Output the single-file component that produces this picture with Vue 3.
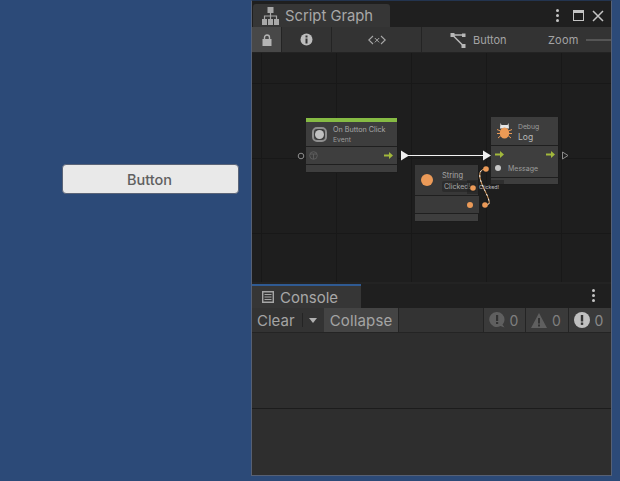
<script setup>
const tools = [
  { label: '0', kind: 'info' },
  { label: '0', kind: 'warn' },
  { label: '0', kind: 'error' },
]
</script>

<template>
  <div class="page">
    <div class="left">
      <button class="game-button">Button</button>
    </div>
    <div class="window">
      <div class="tabbar">
        <div class="tab graph-tab">
          <svg class="tab-icon" width="17" height="19" viewBox="0 0 17 19">
            <path d="M5.500 1h6v6h-6zM0 13h5v6H0zM6 13h5v6H6zM12 13h5v6h-5z" fill="#a8a8a8"/>
            <path d="M8.500 7v6M2.500 13v-3h12v3" fill="none" stroke="#a8a8a8" stroke-width="1.200"/>
          </svg>
          <span>Script Graph</span>
        </div>
        <div class="window-actions">
          <span class="kebab"><i></i><i></i><i></i></span>
          <span class="maximize"></span>
          <svg width="12" height="12" viewBox="0 0 12 12">
            <path d="M1 1l10 10M11 1L1 11" stroke="#c4c4c4" stroke-width="1.500" fill="none"/>
          </svg>
        </div>
      </div>
      <div class="toolbar">
        <div class="tool lock">
          <svg width="10" height="12" viewBox="0 0 10 12">
            <path d="M2.500 5V3.500a2.500 2.500 0 0 1 5 0V5" fill="none" stroke="#b4b4b4" stroke-width="1.400"/>
            <rect x="0.500" y="5" width="9" height="7" fill="#b4b4b4"/>
          </svg>
        </div>
        <div class="tool info">
          <svg width="13" height="13" viewBox="0 0 13 13">
            <circle cx="6.500" cy="6.500" r="6" fill="#bcbcbc"/>
            <rect x="5.500" y="5.500" width="2" height="5" fill="#333"/>
            <rect x="5.500" y="2.500" width="2" height="2" fill="#333"/>
          </svg>
        </div>
        <div class="tool vars">
          <svg width="18" height="10" viewBox="0 0 18 10">
            <path d="M5 1L.8 5 5 9M13 1l4.200 4L13 9" fill="none" stroke="#a8a8a8" stroke-width="1.100"/>
            <path d="M6.800 3l4.400 4.400M11.200 3L6.800 7.400" fill="none" stroke="#a8a8a8" stroke-width="1"/>
          </svg>
        </div>
        <div class="tool crumb">
          <svg width="16" height="16" viewBox="0 0 16 16">
            <path d="M2.500 3h11M2.500 3l11 11" stroke="#b8b8b8" stroke-width="1.500" fill="none"/>
            <rect x="0.500" y="1" width="4" height="4" fill="#b8b8b8"/>
            <rect x="12" y="1.500" width="3.500" height="3.500" fill="#b8b8b8"/>
            <rect x="11.500" y="12" width="4" height="4" fill="#b8b8b8"/>
          </svg>
          <span>Button</span>
        </div>
        <div class="zoom">
          <span>Zoom</span>
          <i class="zoom-track"></i>
        </div>
      </div>

      <div class="canvas">
        <svg class="wires" width="359" height="230" viewBox="0 0 359 230">
          <path d="M152 102.500h80" stroke="#f2f2f2" stroke-width="1.200" fill="none"/>
          <path d="M149 97.500l8 5-8 5z" fill="#f0f0f0"/>
          <path d="M231 97.500l8 5-8 5z" fill="#f0f0f0"/>
          <path d="M310.500 99l5.500 3.500-5.500 3.500z" fill="none" stroke="#8a8a8a"/>
          <circle cx="49" cy="103" r="2.800" fill="none" stroke="#8c8c8c"/>
        </svg>

        <div class="node event-node">
          <div class="node-stripe"></div>
          <div class="node-head">
            <span class="event-icon"><i></i></span>
            <div class="node-titles">
              <span class="small">On Button Click</span>
              <span class="smaller">Event</span>
            </div>
          </div>
          <div class="node-row row-event">
            <svg width="9" height="9" viewBox="0 0 9 9">
              <circle cx="4.500" cy="4.500" r="3.800" fill="none" stroke="#5c5c5c"/>
              <path d="M1 3h7M4.500 3v5" stroke="#5c5c5c" fill="none"/>
            </svg>
            <svg class="flow" width="9" height="7" viewBox="0 0 9 7">
              <path d="M0 2.500h5V0l4 3.500L5 7V4.500H0z" fill="#a2b83c"/>
            </svg>
          </div>
          <div class="node-foot"></div>
        </div>

        <div class="node log-node">
          <div class="node-head log-head">
            <svg width="15" height="16" viewBox="0 0 15 16">
              <path d="M3.500 0l1 2h6l1-2 .5 5.500H3z" fill="#e6e6e6"/>
              <ellipse cx="7.500" cy="10" rx="4.700" ry="5.500" fill="#ec9a55"/>
              <path d="M0 6.500l3.500 1.500M15 6.500L11.500 8M0 10.500h3M15 10.500h-3M1 15l3-2.500M14 15l-3-2.500" stroke="#ec9a55" fill="none"/>
            </svg>
            <div class="node-titles">
              <span class="smaller">Debug</span>
              <span class="small">Log</span>
            </div>
          </div>
          <div class="log-rows">
            <div class="flow-row">
              <svg width="9" height="7" viewBox="0 0 9 7"><path d="M0 2.500h5V0l4 3.500L5 7V4.500H0z" fill="#a2b83c"/></svg>
              <svg width="9" height="7" viewBox="0 0 9 7"><path d="M0 2.500h5V0l4 3.500L5 7V4.500H0z" fill="#a2b83c"/></svg>
            </div>
            <div class="message-row"><i class="port-grey"></i><span>Message</span></div>
          </div>
          <div class="node-foot"></div>
        </div>

        <div class="node string-node">
          <div class="node-head string-head">
            <i class="string-dot"></i>
            <div class="node-titles">
              <span class="small">String</span>
              <span class="string-value">Clicked!</span>
            </div>
          </div>
          <div class="string-row"><i class="port-orange"></i></div>
          <div class="node-foot"></div>
        </div>

        <div class="value-tip">Clicked!</div>
        <svg class="wires top-wires" width="359" height="230" viewBox="0 0 359 230">
          <path d="M234 116c-5 0-7 3-6 9 2 9 8 17 9 23 1 3-1 4-4 4" fill="none" stroke="#e8a35f" stroke-width="1"/>
          <path d="M234 116c-5 0-7 3-6 9 2 9 8 17 9 23 1 3-1 4-4 4" fill="none" stroke="#e8e8e8" stroke-width="1" stroke-dasharray="2 3"/>
          <circle cx="234" cy="116" r="2.800" fill="#eb9a58"/>
          <circle cx="233" cy="152" r="2.800" fill="#eb9a58"/>
          <circle cx="221" cy="135" r="2.800" fill="#eb9a58"/>
        </svg>
      </div>

      <div class="console-tabs">
        <div class="tab console-tab">
          <svg width="12" height="12" viewBox="0 0 12 12">
            <path d="M.7.7h10.600v10.600H.7z" fill="none" stroke="#a6a6a6" stroke-width="1.400"/>
            <path d="M2.500 3.500h7M2.500 6h7M2.500 8.500h7" stroke="#a6a6a6" stroke-width="1.200"/>
          </svg>
          <span>Console</span>
        </div>
        <span class="kebab console-kebab"><i></i><i></i><i></i></span>
      </div>
      <div class="console-bar">
        <div class="clear-group">
          <span>Clear</span>
          <i class="sep"></i>
          <i class="caret"></i>
        </div>
        <div class="collapse">Collapse</div>
        <div class="spacer"></div>
        <div v-for="t in tools" :key="t.kind" class="count" :class="t.kind">
          <svg v-if="t.kind === 'info'" width="16" height="16" viewBox="0 0 16 16">
            <path d="M8 0a7.500 7.500 0 0 1 7.500 7.500c0 2-.8 3.700-2 5l2 3-4-1.500a7.500 7.500 0 1 1-3.500-14z" fill="#5f5f5f"/>
            <rect x="7" y="3" width="2.200" height="6" fill="#323232"/>
            <rect x="7" y="10" width="2.200" height="2" fill="#323232"/>
          </svg>
          <svg v-else-if="t.kind === 'warn'" width="16" height="15" viewBox="0 0 16 15">
            <path d="M8 0l8 15H0z" fill="#5f5f5f"/>
            <rect x="7" y="5" width="2" height="5.500" fill="#323232"/>
            <rect x="7" y="11.500" width="2" height="2" fill="#323232"/>
          </svg>
          <svg v-else width="16" height="16" viewBox="0 0 16 16">
            <circle cx="8" cy="8" r="8" fill="#c0c0c0"/>
            <rect x="6.800" y="3" width="2.400" height="6.500" fill="#333"/>
            <rect x="6.800" y="10.500" width="2.400" height="2.400" fill="#333"/>
          </svg>
          <span>{{ t.label }}</span>
        </div>
      </div>
      <div class="log-list"></div>
      <div class="log-detail"></div>
    </div>
  </div>
</template>

<style>
html, body { margin: 0; background: #2c4a78; }
</style>

<style scoped>
.page {
  width: 620px;
  height: 481px;
  display: flex;
  overflow: hidden;
  background: #2c4a78;
  font-family: Inter, "Liberation Sans", sans-serif;
}
.left {
  width: 251px;
  flex: none;
  padding: 164px 0 0 62px;
  box-sizing: border-box;
}
.game-button {
  display: block;
  width: 177px;
  height: 30px;
  padding: 0 2px 0 0;
  border: 1px solid #5a6478;
  border-radius: 4px;
  background: #e9e9e9;
  color: #606060;
  font: 500 14.500px Inter, "Liberation Sans", sans-serif;
}
.window {
  width: 361px;
  height: 476px;
  flex: none;
  box-sizing: border-box;
  display: flex;
  flex-direction: column;
  background: #2e2e2e;
  border: 1px solid #566074;
  border-top-color: #23344f;
}
.tabbar {
  height: 26px;
  flex: none;
  display: flex;
  align-items: flex-end;
  justify-content: space-between;
  background: #1f1f1f;
  padding-left: 1px;
}
.tab {
  display: flex;
  align-items: center;
  box-sizing: border-box;
  background: #363636;
  color: #a8a8a8;
  font-size: 15px;
}
.graph-tab {
  width: 137px;
  height: 23px;
  gap: 6px;
  padding-left: 9px;
  border-radius: 3px 3px 0 0;
  font-size: 14.800px;
}
.window-actions {
  display: flex;
  align-items: center;
  gap: 8px;
  align-self: flex-start;
  padding: 8px 7px 0 0;
}
.kebab {
  display: flex;
  flex-direction: column;
  gap: 2px;
  width: 3px;
  margin-right: 6px;
}
.kebab i {
  width: 3px;
  height: 3px;
  border-radius: 50%;
  background: #c4c4c4;
}
.maximize {
  width: 9px;
  height: 7px;
  border: 1.500px solid #c4c4c4;
  border-top-width: 3px;
}
.toolbar {
  height: 26px;
  flex: none;
  display: flex;
  align-items: stretch;
  background: #333;
  border-bottom: 1px solid #232323;
  box-sizing: border-box;
  color: #a4a4a4;
  font-size: 11px;
  overflow: hidden;
}
.tool {
  display: flex;
  flex: none;
  align-items: center;
  justify-content: center;
  box-sizing: border-box;
  border-right: 1px solid #242424;
}
.lock { width: 30px; background: #484848; }
.info { width: 50px; }
.vars { width: 90px; }
.crumb {
  border-right: 0;
  width: 125px;
  gap: 7px;
  justify-content: flex-start;
  padding-left: 28px;
}
.zoom {
  display: flex;
  flex: none;
  align-items: center;
  gap: 7px;
  margin-left: 1px;
  letter-spacing: .2px;
}
.zoom-track {
  width: 28px;
  height: 2px;
  background: #555;
}
.canvas {
  position: relative;
  height: 231px;
  flex: none;
  background-color: #1e1e1e;
  background-image:
    linear-gradient(#181818 1px, transparent 1px),
    linear-gradient(90deg, #181818 1px, transparent 1px);
  background-size: 75px 75px;
  background-position: 9px 30px;
  overflow: hidden;
  border-bottom: 2px solid #232323;
  box-sizing: border-box;
}
.wires { position: absolute; left: 0; top: 0; }
.top-wires { z-index: 3; }
.node {
  position: absolute;
  box-sizing: border-box;
  background: #2a2a2a;
  display: flex;
  flex-direction: column;
  color: #b8b8b8;
  border: 1px solid #1c1c1c;
  border-width: 0 1px 1px 0;
}
.event-node { left: 54px; top: 65px; width: 92px; height: 55px; }
.log-node { left: 239px; top: 64px; width: 68px; height: 68px; }
.string-node { left: 163px; top: 112px; width: 64px; height: 57px; }
.node-stripe { height: 4px; background: #86bb44; flex: none; }
.node-head {
  height: 24px;
  flex: none;
  display: flex;
  align-items: center;
  gap: 6px;
  padding-left: 6px;
  background: #3d3d3d;
  border-bottom: 1px solid #1f1f1f;
}
.log-head { height: 28px; gap: 6px; padding-left: 6px; }
.log-head .node-titles { padding-top: 3px; }
.string-head { height: 30px; gap: 9px; padding-left: 6px; background: #383838; }
.string-head .node-titles { padding-top: 3px; }
.node-titles { display: flex; flex-direction: column; gap: 1px; min-width: 0; }
.small { font-size: 7.200px; line-height: 9px; white-space: nowrap; color: #a8a8a8; }
.smaller { font-size: 6.800px; line-height: 9px; color: #9c9c9c; white-space: nowrap; }
.log-node .small { font-size: 8.500px; line-height: 11px; color: #b8b8b8; }
.string-node .small { font-size: 7.500px; }
.event-icon {
  width: 15px;
  height: 15px;
  flex: none;
  box-sizing: border-box;
  border: 2px solid #8e8e8e;
  border-radius: 5px;
  display: flex;
  align-items: center;
  justify-content: center;
}
.event-icon i {
  width: 9px;
  height: 9px;
  border-radius: 50%;
  background: #c0c0c0;
}
.node-row {
  flex: none;
  height: 18px;
  background: #3e3e3e;
  border-bottom: 1px solid #1f1f1f;
  box-sizing: border-box;
}
.row-event {
  display: flex;
  align-items: center;
  justify-content: space-between;
  padding: 0 4px 0 3px;
}
.log-rows {
  height: 32px;
  flex: none;
  box-sizing: border-box;
  background: #3e3e3e;
  border-bottom: 1px solid #1f1f1f;
  display: flex;
  flex-direction: column;
}
.flow-row {
  display: flex;
  justify-content: space-between;
  align-items: center;
  height: 15px;
  padding: 1px 3px 0 4px;
  box-sizing: border-box;
}
.message-row {
  display: flex;
  align-items: center;
  gap: 7px;
  padding-left: 4px;
  height: 14px;
  font-size: 7px;
  color: #9c9c9c;
}
.port-grey {
  width: 6px;
  height: 6px;
  border-radius: 50%;
  background: #c8c8c8;
}
.node-foot { flex: 1; background: #3e3e3e; }
.string-dot {
  width: 12px;
  height: 12px;
  border-radius: 50%;
  background: #eb9a58;
  flex: none;
}
.string-value {
  font-size: 7px;
  line-height: 11px;
  background: #2c2c2c;
  color: #aaa;
  padding-left: 2px;
  box-sizing: border-box;
  border-radius: 2px;
  width: 34px;
  white-space: nowrap;
}
.string-row {
  height: 18px;
  flex: none;
  box-sizing: border-box;
  background: #3a3a3a;
  border-bottom: 1px solid #1f1f1f;
  display: flex;
  align-items: center;
  justify-content: flex-end;
  padding-right: 6px;
  margin-right: -1px;
}
.port-orange {
  width: 6px;
  height: 6px;
  border-radius: 50%;
  background: #eb9a58;
}
.value-tip {
  position: absolute;
  z-index: 2;
  left: 215px;
  top: 127px;
  width: 37px;
  height: 14px;
  box-sizing: border-box;
  padding-left: 12px;
  background: rgba(30, 30, 30, .5);
  color: #c4c4c4;
  font-size: 5.300px;
  line-height: 14px;
  white-space: nowrap;
}
.console-tabs {
  height: 24px;
  flex: none;
  display: flex;
  justify-content: space-between;
  background: #1f1f1f;
}
.console-tab {
  width: 109px;
  height: 24px;
  gap: 6px;
  padding-left: 10px;
  border-top: 2px solid #2f5a92;
}
.console-kebab { margin: 5px 16px 0 0; }
.console-bar {
  height: 25px;
  flex: none;
  display: flex;
  box-sizing: border-box;
  background: #333;
  border-bottom: 1px solid #242424;
  color: #a4a4a4;
  font-size: 15px;
  padding-right: 1px;
}
.clear-group {
  width: 72px;
  flex: none;
  display: flex;
  align-items: center;
  padding-left: 5px;
  box-sizing: border-box;
}
.sep { width: 1px; height: 14px; background: #242424; margin-left: 7px; }
.caret {
  width: 0;
  height: 0;
  margin-left: 6px;
  border: 4.500px solid transparent;
  border-top: 5px solid #b0b0b0;
  border-bottom: 0;
}
.collapse {
  width: 75px;
  flex: none;
  display: flex;
  align-items: center;
  justify-content: center;
  box-sizing: border-box;
  background: #444;
  border-right: 1px solid #242424;
  letter-spacing: .15px;
}
.spacer { flex: 1; }
.count {
  width: 42.500px;
  flex: none;
  display: flex;
  align-items: center;
  gap: 5px;
  padding-left: 5px;
  box-sizing: border-box;
  background: #3a3a3a;
  border-left: 1px solid #242424;
  color: #7f7f7f;
  font-size: 14px;
}
.count.error { color: #8a8a8a; }
.log-list {
  height: 76px;
  flex: none;
  box-sizing: border-box;
  background: #2e2e2e;
  border-bottom: 1px solid #1c1c1c;
}
.log-detail { flex: 1; background: #2e2e2e; }
</style>
